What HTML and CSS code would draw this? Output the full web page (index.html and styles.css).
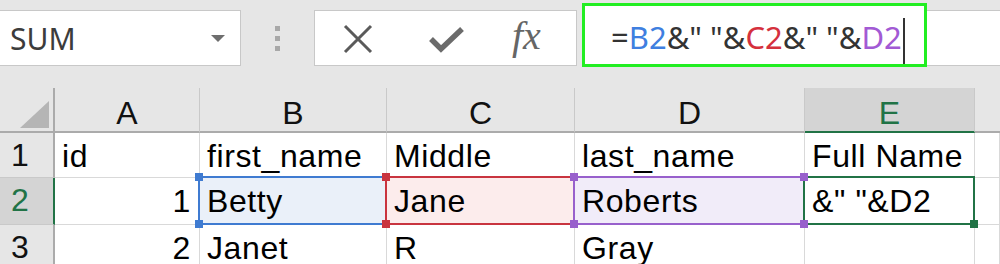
FILE: index.html
```html
<!DOCTYPE html>
<html lang="en">
<head>
  <meta charset="UTF-8" />
  <title>Concatenate names</title>
  <link rel="stylesheet" href="styles.css">
</head>
<body>
  <div class="toolbar">
    <div class="namebox">
      <span>SUM</span>
      <span class="caret"></span>
    </div>
    <div class="grip"><i></i><i></i><i></i></div>
    <div class="fbuttons">
      <svg class="ico-x" width="32" height="30" viewBox="0 0 32 30">
        <path d="M3 2 L29 28 M29 2 L3 28" stroke="#5a5a5a" stroke-width="3" fill="none"/>
      </svg>
      <svg class="ico-ok" width="38" height="28" viewBox="0 0 38 28">
        <path d="M3 13 L13 23 L34 3" stroke="#6b6b6b" stroke-width="5.5" fill="none"/>
      </svg>
      <span class="fx">fx</span>
    </div>
    <div class="formula">
      <div class="edit">=<span class="c-b">B2</span>&amp;" "&amp;<span class="c-c">C2</span>&amp;" "&amp;<span class="c-d">D2</span><span class="cursor"></span></div>
      <div class="rest"></div>
    </div>
  </div>

  <div class="sheet">
    <div class="hd corner"><span class="tri"></span></div>
    <div class="hd col">A</div>
    <div class="hd col">B</div>
    <div class="hd col">C</div>
    <div class="hd col">D</div>
    <div class="hd col sel">E</div>
    <div class="hd col last"></div>

    <div class="hd row">1</div>
    <div class="cell">id</div>
    <div class="cell">first_name</div>
    <div class="cell">Middle</div>
    <div class="cell">last_name</div>
    <div class="cell">Full Name</div>
    <div class="cell"></div>

    <div class="hd row sel">2</div>
    <div class="cell num">1</div>
    <div class="cell ref ref-b">Betty<i class="h tl"></i><i class="h tr"></i><i class="h bl"></i><i class="h br"></i></div>
    <div class="cell ref ref-c">Jane<i class="h tl"></i><i class="h tr"></i><i class="h bl"></i><i class="h br"></i></div>
    <div class="cell ref ref-d">Roberts<i class="h tl"></i><i class="h tr"></i><i class="h bl"></i><i class="h br"></i></div>
    <div class="cell active">&amp;" "&amp;D2<i class="h br"></i></div>
    <div class="cell"></div>

    <div class="hd row">3</div>
    <div class="cell num">2</div>
    <div class="cell">Janet</div>
    <div class="cell">R</div>
    <div class="cell">Gray</div>
    <div class="cell"></div>
    <div class="cell"></div>
  </div>
</body>
</html>
```

FILE: styles.css
```css
body {
  margin: 0;
  width: 1000px;
  height: 264px;
  overflow: hidden;
  background: #e6e6e6;
  font-family: "Liberation Sans", Arial, sans-serif;
  color: #111;
}

/* formula bar */
.toolbar {
  display: flex;
  align-items: flex-start;
  height: 88px;
  padding-top: 3px;
  box-sizing: border-box;
}
.namebox {
  width: 241px;
  height: 56px;
  margin-top: 7px;
  box-sizing: border-box;
  background: #fff;
  border: 1px solid #c8c8c8;
  border-left: none;
  display: flex;
  align-items: center;
  justify-content: space-between;
  padding: 0 15px 0 10px;
  font-family: "Noto Sans", "Open Sans", sans-serif;
  font-size: 30px;
  color: #3c3c3c;
}
.caret {
  width: 0;
  height: 0;
  border-left: 7px solid transparent;
  border-right: 7px solid transparent;
  border-top: 7px solid #6e6e6e;
}
.grip {
  width: 73px;
  height: 56px;
  margin-top: 7px;
  display: flex;
  flex-direction: column;
  align-items: center;
  justify-content: center;
  gap: 5px;
}
.grip i {
  width: 5px;
  height: 5px;
  background: #a8a8a8;
}
.fbuttons {
  width: 263px;
  height: 56px;
  margin-top: 7px;
  box-sizing: border-box;
  background: #fff;
  border: 1px solid #c8c8c8;
  display: flex;
  align-items: center;
  padding-left: 27px;
}
.ico-x { margin-top: 1px; }
.ico-ok { margin-left: 54px; margin-top: 3px; }
.fx {
  margin-left: 46px;
  font-family: "Liberation Serif", "Times New Roman", serif;
  font-style: italic;
  font-size: 40px;
  color: #666;
  margin-top: -6px;
}
.formula {
  flex: 1;
  display: flex;
  align-items: flex-start;
  margin-left: 5px;
}
.edit {
  width: 345px;
  height: 64px;
  box-sizing: border-box;
  border: 3px solid #22ee22;
  background: #fff;
  padding: 4px 0 0 26px;
  line-height: 54px;
  font-family: "Noto Sans", "Open Sans", sans-serif;
  font-size: 31px;
  color: #333;
  white-space: pre;
}
.c-b { color: #3f7fe0; }
.c-c { color: #d5313d; }
.c-d { color: #a25ad4; }
.cursor {
  display: inline-block;
  width: 2px;
  height: 46px;
  background: #333;
  vertical-align: middle;
  margin-left: 1px;
}
.rest {
  flex: 1;
  height: 56px;
  margin-top: 7px;
  box-sizing: border-box;
  background: #fff;
  border-top: 1px solid #c8c8c8;
  border-bottom: 1px solid #c8c8c8;
}

/* grid */
.sheet {
  display: grid;
  grid-template-columns: 55px 145px 187px 188px 230px 170px 1fr;
  grid-template-rows: 45px 45px 47px 1fr;
  height: 176px;
}
.hd {
  background: #e6e6e6;
  font-size: 32px;
  line-height: 45px;
  color: #111;
  box-sizing: border-box;
}
.corner {
  position: relative;
  border-right: 2px solid #ababab;
  border-bottom: 2px solid #ababab;
}
.tri {
  position: absolute;
  left: 20px;
  top: 13px;
  width: 0;
  height: 0;
  border-left: 29px solid transparent;
  border-bottom: 27px solid #b5b5b5;
}
.col {
  text-align: center;
  padding-top: 3px;
  border-right: 1px solid #c9c9c9;
  border-bottom: 2px solid #ababab;
}
.col.sel {
  background: #d4d4d4;
  color: #217346;
  border-bottom-color: #217346;
}
.col.last { border-right: none; }
.row {
  padding-left: 11px;
  border-right: 2px solid #ababab;
  border-bottom: 1px solid #c9c9c9;
}
.row.sel {
  background: #d4d4d4;
  color: #217346;
  border-right-color: #217346;
}
.cell {
  position: relative;
  background: #fff;
  border-right: 1px solid #d9d9d9;
  border-bottom: 1px solid #d9d9d9;
  font-size: 32px;
  letter-spacing: 0.6px;
  line-height: 45px;
  padding: 1px 0 0 7px;
  box-sizing: border-box;
  white-space: nowrap;
  color: #000;
}
.num {
  text-align: right;
  padding: 1px 8px 0 0;
}

/* range highlights */
.ref::after,
.active::after {
  content: "";
  position: absolute;
  left: -2px;
  top: -2px;
  right: -1px;
  bottom: -1px;
  border: 2px solid;
}
.ref-b { background: #eaf0f9; }
.ref-b::after, .ref-b .h { border-color: #3f7bd1; background-color: #3f7bd1; }
.ref-c { background: #fcecec; }
.ref-c::after, .ref-c .h { border-color: #c9343f; background-color: #c9343f; }
.ref-d { background: #f1ecf9; }
.ref-d::after, .ref-d .h { border-color: #9860cc; background-color: #9860cc; }
.ref::after { background: none; }
.active::after { border-color: #217346; }
.active .h { background: #217346; }
.h {
  position: absolute;
  width: 8px;
  height: 8px;
  z-index: 2;
}
.tl { left: -5px; top: -5px; }
.tr { right: -4px; top: -5px; }
.bl { left: -5px; bottom: -4px; }
.br { right: -4px; bottom: -4px; }
.ref-d .tr, .ref-d .br { z-index: 3; }
```
